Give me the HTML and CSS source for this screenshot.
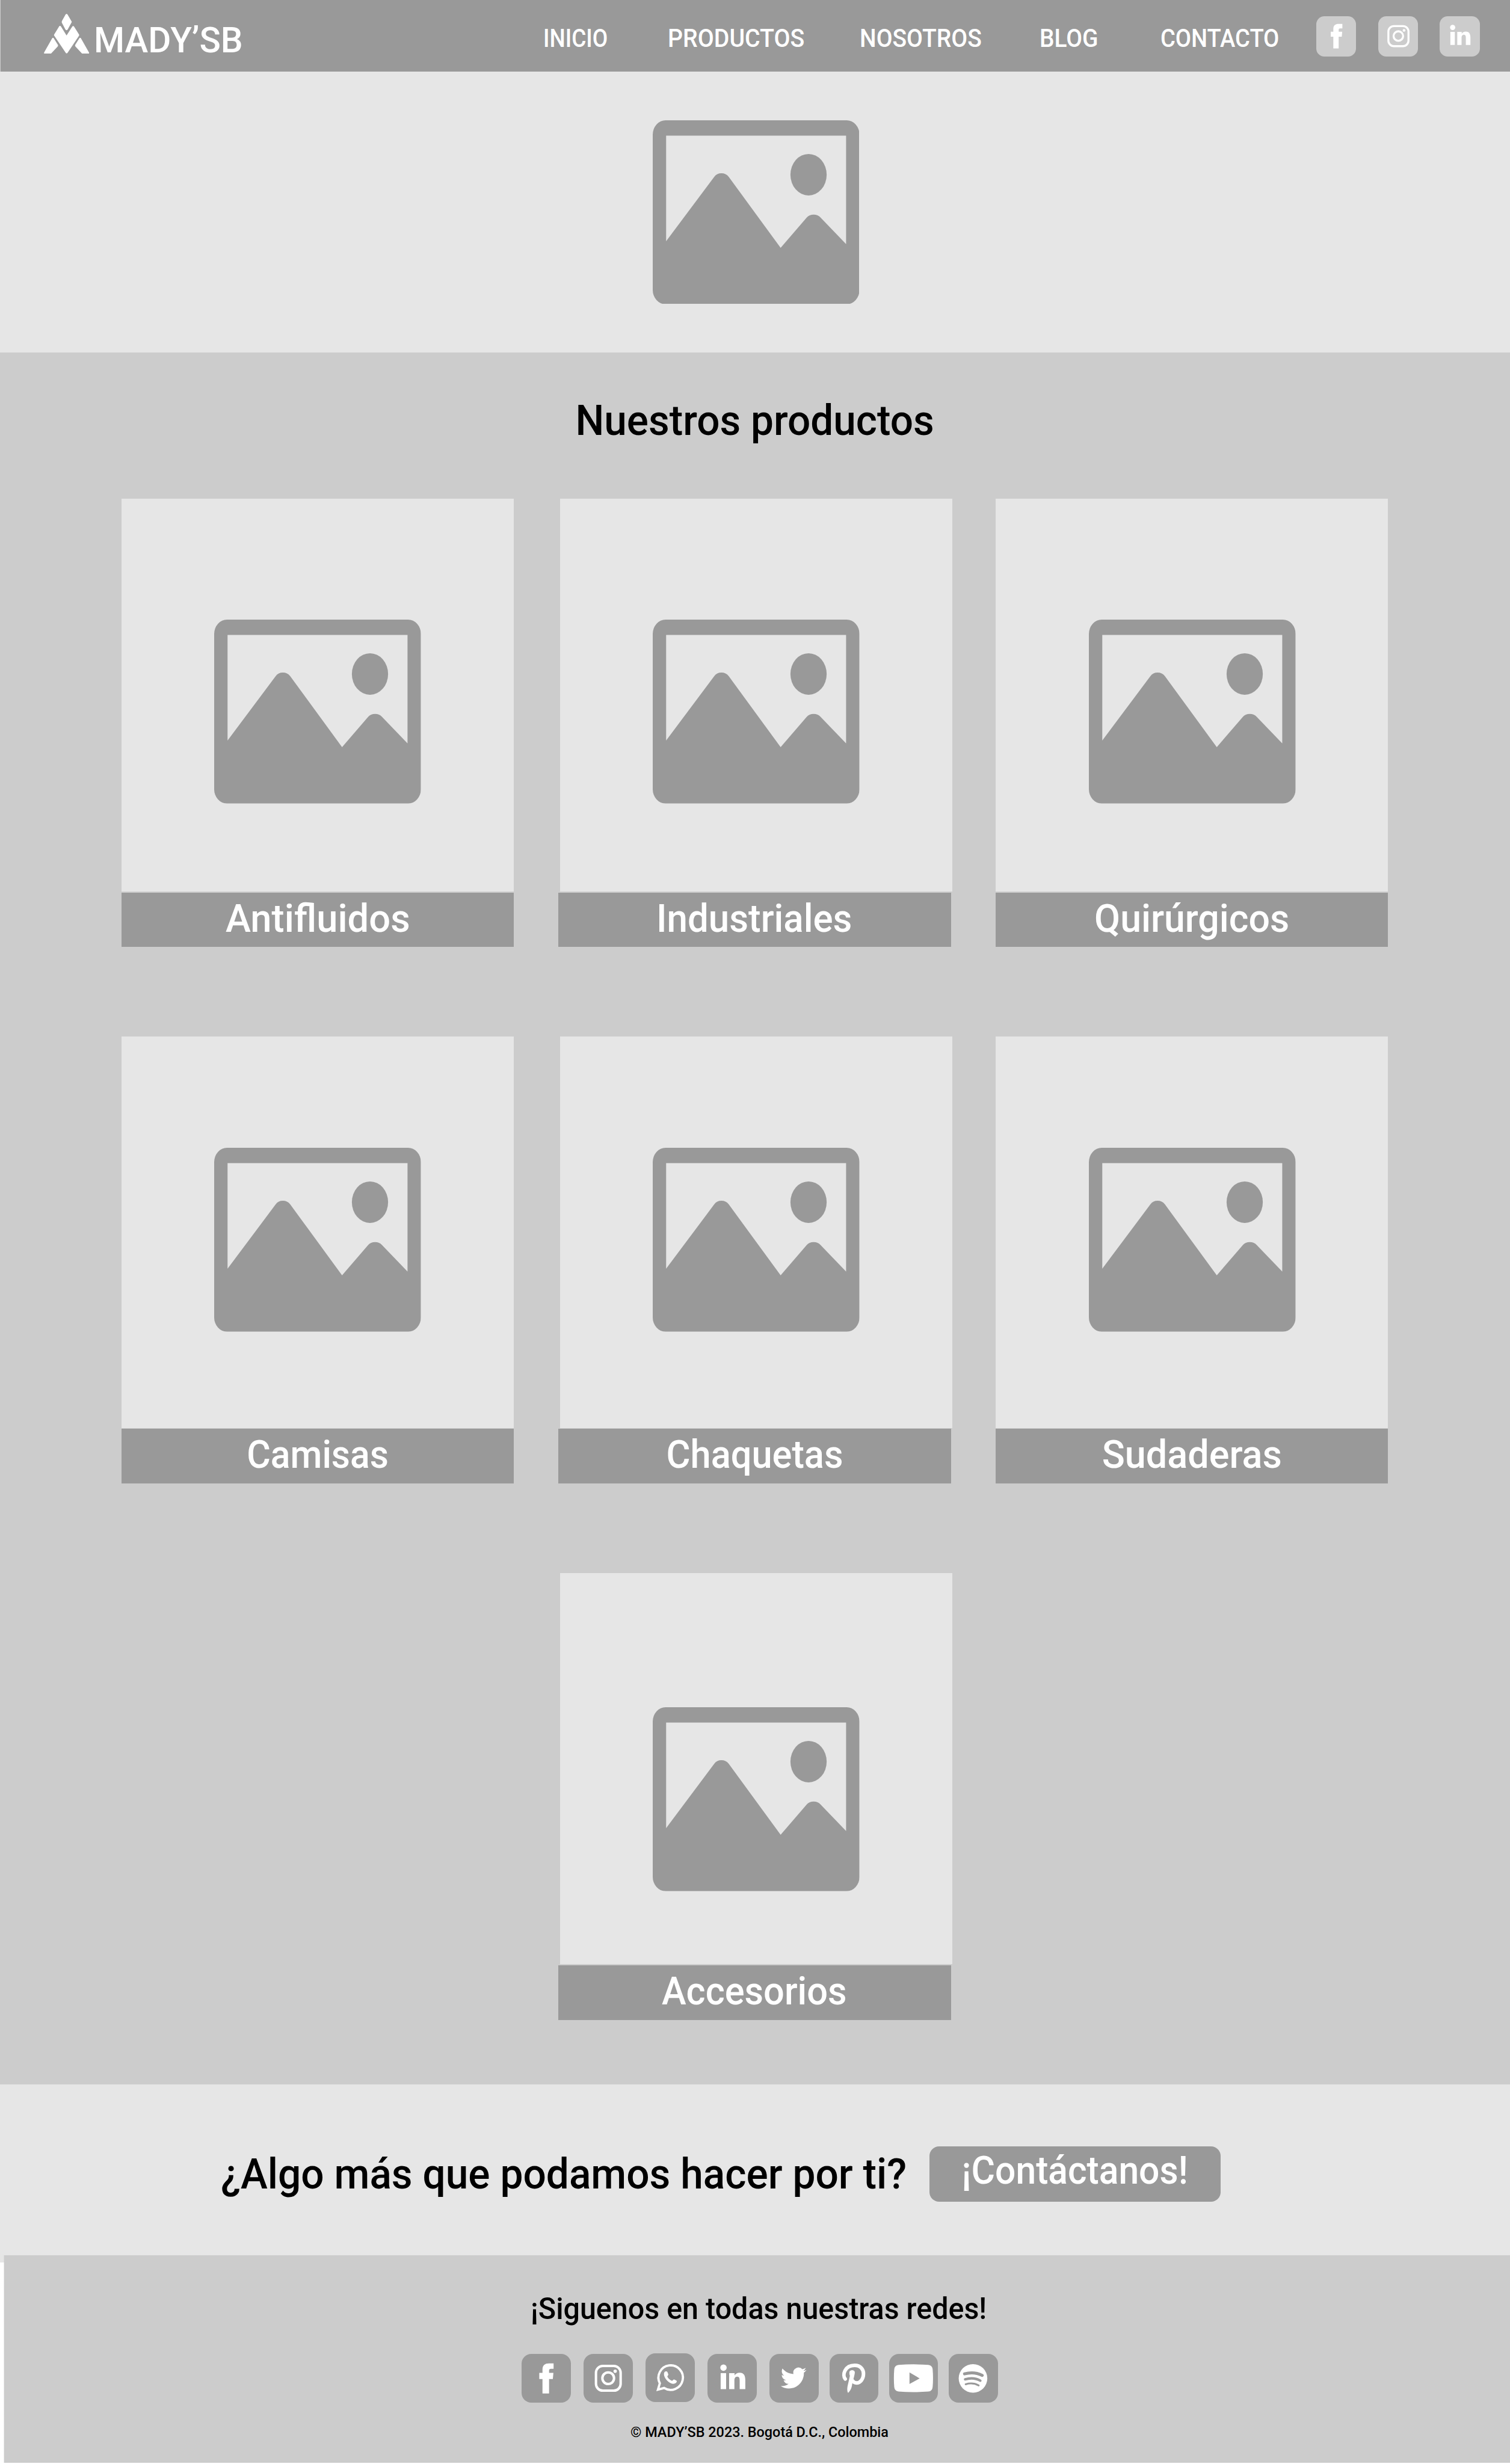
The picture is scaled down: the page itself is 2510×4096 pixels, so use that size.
FILE: index.html
```html
<!DOCTYPE html>
<html lang="es">
<head>
<meta charset="utf-8">
<title>MADY’SB</title>
<link rel="stylesheet" href="styles.css">
</head>
<body>
<svg class="sprite" aria-hidden="true">
  <symbol id="picture" viewBox="100 97 1096 975" preserveAspectRatio="none">
    <path fill-rule="evenodd" d="M168 97H1128A68 76 0 0 1 1196 173V996A68 76 0 0 1 1128 1072H168A68 76 0 0 1 100 996V173A68 76 0 0 1 168 97ZM171 178V738L426 397Q440 378 464 378T503 397L778 773L916 613Q930 597 953 597T990 613L1125 753V178Z"/>
    <ellipse cx="926" cy="385.500" rx="96" ry="110"/>
  </symbol>
  <symbol id="facebook" viewBox="0 0 260 260">
    <path d="M111 210V133H94V101H111V84C111 60 123 50 146 50H170V79H156C149 79 146 82 146 89V101H169L166 133H146V210Z"/>
  </symbol>
  <symbol id="instagram" viewBox="0 0 260 260">
    <g fill="none" stroke="#fff" stroke-width="13"><rect x="66" y="64" width="131" height="131" rx="36"/><circle cx="131" cy="129" r="31"/></g>
    <circle cx="168" cy="92" r="9"/>
  </symbol>
  <symbol id="whatsapp" viewBox="0 0 260 260">
    <path fill="none" stroke="#fff" stroke-width="12" d="M66 193L76 159A65 65 0 1 1 99 184Z"/>
    <path d="M98 110c0-8 4-14 11-14 5 0 7 2 9 7l3 9c1 4-5 8-5 12 3 8 14 18 24 22 5 1 7-7 11-7 3 0 13 6 15 8 1 8-7 15-19 15-22-1-50-31-49-52z"/>
  </symbol>
  <symbol id="linkedin" viewBox="0 0 260 260">
    <circle cx="85" cy="73" r="17"/><rect x="70" y="102" width="29" height="85"/>
    <path d="M115 102h29v12c6-9 14-14 27-14 22 0 30 15 30 40v47h-30v-45c0-12-2-21-13-21s-15 9-15 21v45h-28z"/>
  </symbol>
  <symbol id="twitter" viewBox="0 0 260 260">
    <path transform="translate(60 59.500) scale(5.700)" d="M23.953 4.57a10 10 0 01-2.825.775 4.958 4.958 0 002.163-2.723c-.951.555-2.005.959-3.127 1.184a4.92 4.92 0 00-8.384 4.482C7.69 8.095 4.067 6.13 1.64 3.162a4.822 4.822 0 00-.666 2.475c0 1.71.87 3.213 2.188 4.096a4.904 4.904 0 01-2.228-.616v.06a4.923 4.923 0 003.946 4.827 4.996 4.996 0 01-2.212.085 4.936 4.936 0 004.604 3.417 9.867 9.867 0 01-6.102 2.105c-.39 0-.779-.023-1.17-.067a13.995 13.995 0 007.557 2.209c9.053 0 13.998-7.496 13.998-13.985 0-.21 0-.42-.015-.63A9.935 9.935 0 0024 4.59z"/>
  </symbol>
  <symbol id="pinterest" viewBox="0 0 260 260">
    <path fill="none" stroke="#fff" stroke-width="19" stroke-linecap="round" d="M83 133C66 112 80 61 133 61C166 61 180 84 180 105C180 135 162 154 143 154C132 154 126 149 123 143"/>
    <path d="M105 98c0-16 29-16 29 0 0 12-14 60-15 68-2 16-10 32-21 41-5-8-5-22-3-34l13-57c-2-4-3-10-3-18z"/>
  </symbol>
  <symbol id="youtube" viewBox="0 0 260 260">
    <path fill-rule="evenodd" d="M50 58Q129 53 208 58Q229 60 231 82Q235 129 231 176Q229 199 208 200Q129 206 50 200Q29 198 27 176Q23 129 27 82Q29 60 50 58ZM108 98V160L162 130Z"/>
  </symbol>
  <symbol id="spotify" viewBox="0 0 260 260">
    <circle cx="129" cy="130" r="76"/>
    <g fill="none" stroke="#999" stroke-linecap="round"><path stroke-width="16" d="M84 106Q134 92 178 114"/><path stroke-width="13" d="M87 135Q132 122 168 142"/><path stroke-width="10" d="M90 161Q128 150 159 167"/></g>
  </symbol>
</svg>

<header class="header">
  <a class="brand">
    <svg class="brand-mark" viewBox="52 43 240 212">
      <path d="M172 43Q175 43 178 48L199 84Q200 86 199 88L178 126Q172 134 166 126L147 90Q146 86 147 82L166 48Q169 43 172 43Z"/>
      <path d="M137 107Q140 107 143 111L172 158L202 111Q207 104 212 111L238 152Q240 156 238 159L178 249Q172 257 167 249L107 159Q104 155 107 151L132 111Q134 107 137 107Z"/>
      <path d="M104 172Q100 168 96 172L53 248Q51 255 58 255H84Q90 255 93 250L125 216Q128 212 126 207Z"/>
      <path d="M240 172Q244 168 248 172L291 248Q293 255 286 255H260Q254 255 251 250L219 216Q216 212 218 207Z"/>
    </svg>
    <span class="brand-name"><span class="t fit-brand">MADY’SB</span></span>
  </a>
  <nav class="nav">
    <a><span class="t fit-inicio">INICIO</span></a>
    <a><span class="t fit-productos">PRODUCTOS</span></a>
    <a><span class="t fit-nosotros">NOSOTROS</span></a>
    <a><span class="t fit-blog">BLOG</span></a>
    <a><span class="t fit-contacto">CONTACTO</span></a>
  </nav>
  <div class="header-social">
    <svg class="tile"><use href="#facebook"/></svg>
    <svg class="tile"><use href="#instagram"/></svg>
    <svg class="tile"><use href="#linkedin"/></svg>
  </div>
</header>

<section class="hero"><svg class="picture"><use href="#picture"/></svg></section>

<main class="products">
  <h1 class="title"><span class="t fit-title">Nuestros productos</span></h1>
  <div class="grid">
    <article class="card"><div class="photo"><svg class="picture"><use href="#picture"/></svg></div><h2 class="label"><span class="t fit-antifluidos">Antifluidos</span></h2></article>
    <article class="card mid"><div class="photo"><svg class="picture"><use href="#picture"/></svg></div><h2 class="label"><span class="t fit-industriales">Industriales</span></h2></article>
    <article class="card last"><div class="photo"><svg class="picture"><use href="#picture"/></svg></div><h2 class="label"><span class="t fit-quirurgicos">Quirúrgicos</span></h2></article>
    <article class="card second"><div class="photo"><svg class="picture"><use href="#picture"/></svg></div><h2 class="label"><span class="t fit-camisas">Camisas</span></h2></article>
    <article class="card mid second"><div class="photo"><svg class="picture"><use href="#picture"/></svg></div><h2 class="label"><span class="t fit-chaquetas">Chaquetas</span></h2></article>
    <article class="card last second"><div class="photo"><svg class="picture"><use href="#picture"/></svg></div><h2 class="label"><span class="t fit-sudaderas">Sudaderas</span></h2></article>
    <article class="card mid third"><div class="photo"><svg class="picture"><use href="#picture"/></svg></div><h2 class="label"><span class="t fit-accesorios">Accesorios</span></h2></article>
  </div>
</main>

<section class="cta">
  <p class="cta-text"><span class="t fit-cta">¿Algo más que podamos hacer por ti?</span></p>
  <a class="button"><span class="t fit-button">¡Contáctanos!</span></a>
</section>

<footer class="footer">
  <p class="follow"><span class="t fit-follow">¡Siguenos en todas nuestras redes!</span></p>
  <div class="footer-social">
    <svg class="tile"><use href="#facebook"/></svg>
    <svg class="tile"><use href="#instagram"/></svg>
    <svg class="tile raised"><use href="#whatsapp"/></svg>
    <svg class="tile"><use href="#linkedin"/></svg>
    <svg class="tile"><use href="#twitter"/></svg>
    <svg class="tile near"><use href="#pinterest"/></svg>
    <svg class="tile near"><use href="#youtube"/></svg>
    <svg class="tile near"><use href="#spotify"/></svg>
  </div>
  <p class="copyright"><span class="t fit-copyright">© MADY’SB 2023. Bogotá D.C., Colombia</span></p>
</footer>
</body>
</html>
```
FILE: styles.css
```css
/* 1rem stands for 100 units of the 2668-unit wide layout grid */
html { font-size: 94.08px; }
* { box-sizing: border-box; }
body {
  margin: 0;
  background: #fff;
  color: #000;
  font-family: Roboto, "Noto Sans", sans-serif;
  font-weight: 500;
  overflow: hidden;
}
h1, h2, p { margin: 0; font-weight: 500; }
svg { display: block; fill: #fff; }
.sprite { position: absolute; width: 0; height: 0; }

.t { display: inline-block; white-space: nowrap; transform: scaleX(var(--fit, 1)); transform-origin: left; }
.label .t, .title .t, .button .t { transform-origin: center; }
.fit-brand { --fit: .985; }
.fit-inicio { --fit: .874; }
.fit-productos { --fit: .927; }
.fit-nosotros { --fit: .921; }
.fit-blog { --fit: .917; }
.fit-contacto { --fit: .9; }
.fit-title { --fit: .963; }
.fit-antifluidos { --fit: .975; }
.fit-industriales { --fit: .953; }
.fit-quirurgicos { --fit: .964; }
.fit-camisas { --fit: .935; }
.fit-chaquetas { --fit: .945; }
.fit-sudaderas { --fit: .97; }
.fit-accesorios { --fit: .945; }
.fit-cta { --fit: .965; }
.fit-button { --fit: .933; }
.fit-follow { --fit: .962; }
.fit-copyright { --fit: .957; }

.header {
  height: 1.27rem;
  padding-left: .765rem;
  display: flex;
  background: #999;
  color: #fff;
  border-left: 1px solid #ccc;
}
.brand { width: 8.82rem; display: flex; }
.brand-mark { width: .8rem; height: .707rem; margin-top: .243rem; }
.brand-name { margin: .365rem 0 0 .08rem; font-size: .63rem; line-height: .7rem; }
.nav {
  display: grid;
  grid-template-columns: 2.203rem 3.39rem 3.176rem 2.144rem 2.34rem;
  padding-top: .378rem;
  font-size: .45rem;
  line-height: .6rem;
}
.header-social { display: flex; gap: .385rem; margin: .29rem 0 0 .41rem; }
.tile { width: .865rem; height: .865rem; border-radius: 20%; background: #999; flex: none; }
.header-social .tile { width: .705rem; height: .705rem; background: #ccc; }

.hero { height: 4.955rem; background: #e6e6e6; padding: .853rem 0 0 11.53rem; }
.picture { width: 3.653rem; height: 3.25rem; fill: #999; }

.products { height: 30.605rem; background: #ccc; }
.title {
  height: 2.59rem;
  padding-top: .705rem;
  text-align: center;
  font-size: .745rem;
  line-height: 1rem;
}
.grid {
  display: grid;
  grid-template-columns: 6.93rem 6.93rem 6.93rem;
  column-gap: .79rem;
  row-gap: 1.59rem;
  padding-left: 2.15rem;
}
.card { width: 6.93rem; }
.card.mid { margin-left: .03rem; }
.photo {
  height: 6.935rem;
  margin-bottom: .02rem;
  padding: 2.135rem 0 0 1.635rem;
  background: #e6e6e6;
}
.last .photo { padding-left: 1.65rem; }
.second .photo { height: 6.91rem; padding-top: 1.965rem; }
.third .photo { height: 6.91rem; padding-top: 2.37rem; }
.third { grid-column: 2; }
.label {
  height: .96rem;
  background: #999;
  color: #fff;
  text-align: center;
  font-size: .69rem;
  line-height: .93rem;
}
.mid .label { margin-left: -.04rem; width: 6.94rem; }

.cta { height: 3.02rem; background: #e6e6e6; display: flex; }
.cta-text { padding: 1.08rem 0 0 3.9rem; width: 16.42rem; font-size: .745rem; line-height: 1rem; }
.button {
  width: 5.15rem;
  height: .97rem;
  margin-top: 1.1rem;
  border-radius: .17rem;
  background: #999;
  color: #fff;
  text-align: center;
  font-size: .69rem;
  line-height: .87rem;
}

.footer {
  height: 3.67rem;
  background: linear-gradient(#e6e6e6 .13rem, #fff .13rem) left / .07rem 100% no-repeat, #ccc;
  display: flex;
  flex-direction: column;
}
.follow { padding: .59rem 0 0 9.38rem; font-size: .535rem; line-height: .7rem; }
.footer-social { display: flex; gap: .23rem; margin: .45rem 0 0 9.22rem; }
.raised { margin-top: -.01rem; }
.near { margin-left: -.04rem; }
.copyright { margin: .32rem 0 0 11.14rem; font-size: .26rem; line-height: .4rem; }
```
